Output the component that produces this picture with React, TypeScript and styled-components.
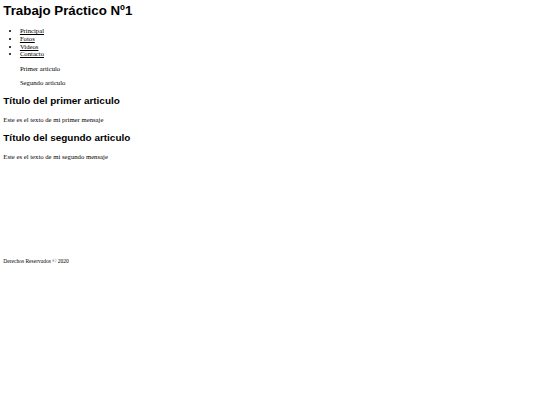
import React from 'react';
import styled, { createGlobalStyle } from 'styled-components';

const GlobalStyle = createGlobalStyle`
  html, body {
    margin: 0;
    padding: 0;
    background: #ffffff;
  }
  body {
    padding: 3.3px;
    font-family: "Liberation Serif", "Times New Roman", serif;
    font-size: 6.7px;
    line-height: 1.15;
    color: #000000;
  }
`;

const Page = styled.div`
  display: block;
`;

const Title = styled.h1`
  margin: 0 0 8.8px;
  font-family: "Liberation Sans", Arial, sans-serif;
  font-size: 13.3px;
  font-weight: bold;
`;

const NavList = styled.ul`
  margin: 6.6px 0;
  padding-left: 16.6px;
  list-style: disc;
`;

const NavLink = styled.a`
  color: #000000;
  text-decoration: underline;
`;

const Aside = styled.aside`
  margin: 6.6px 0 6.6px 16.6px;
`;

const AsideItem = styled.p`
  margin: 6.6px 0;
`;

const ArticleTitle = styled.h2`
  margin: 8.2px 0 9.7px;
  font-family: "Liberation Sans", Arial, sans-serif;
  font-size: 9.95px;
  font-weight: bold;
`;

const ArticleText = styled.p`
  margin: 6.6px 0;
`;

const Footer = styled.footer`
  margin-top: 97px;
  font-size: 5.5px;
`;

const links = ['Principal', 'Fotos', 'Videos', 'Contacto'];

const articles = [
  { title: 'Título del primer articulo', text: 'Este es el texto de mi primer mensaje' },
  { title: 'Título del segundo articulo', text: 'Este es el texto de mi segundo mensaje' },
];

const App: React.FC = () => {
  return (
    <Page>
      <GlobalStyle />
      <header>
        <Title>Trabajo Práctico Nº1</Title>
        <nav>
          <NavList>
            {links.map(l => (
              <li key={l}>
                <NavLink href="#">{l}</NavLink>
              </li>
            ))}
          </NavList>
        </nav>
      </header>
      <Aside>
        <AsideItem>Primer articulo</AsideItem>
        <AsideItem>Segundo articulo</AsideItem>
      </Aside>
      <main>
        {articles.map(a => (
          <article key={a.title}>
            <ArticleTitle>{a.title}</ArticleTitle>
            <ArticleText>{a.text}</ArticleText>
          </article>
        ))}
      </main>
      <Footer>Derechos Reservados © 2020</Footer>
    </Page>
  );
};

export default App;
